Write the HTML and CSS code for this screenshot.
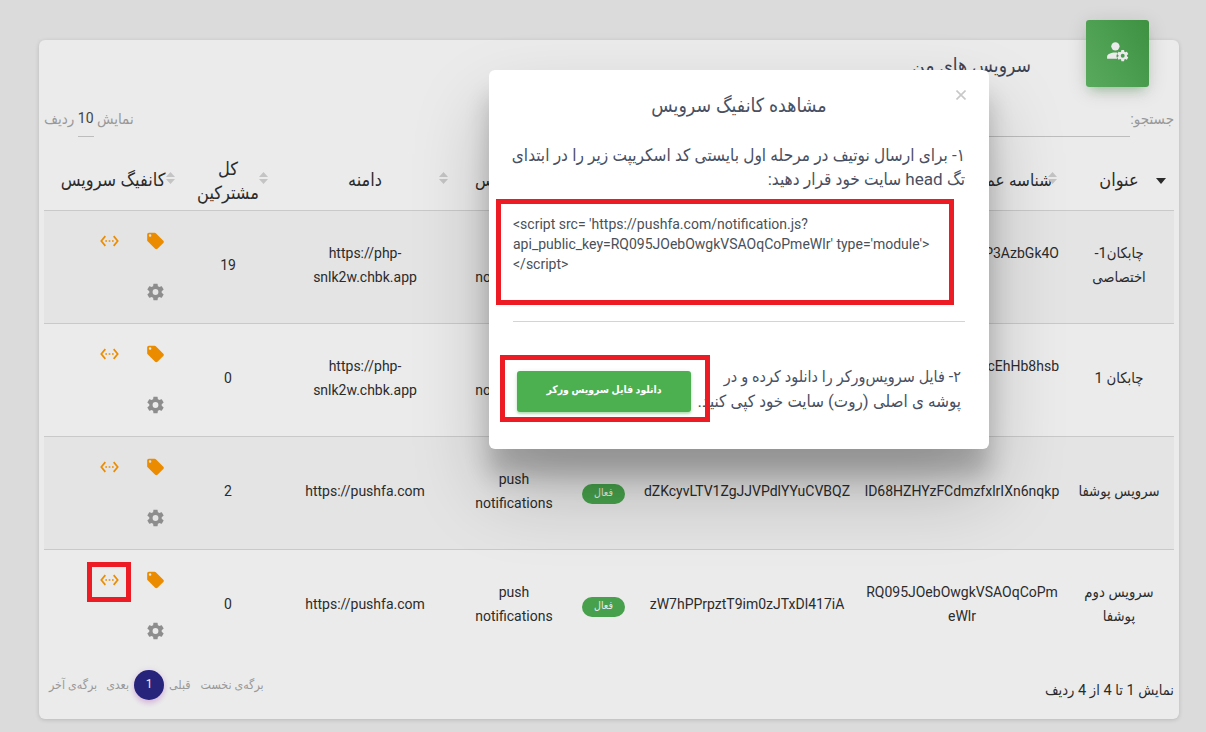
FILE: index.html
```html
<!DOCTYPE html>
<html lang="fa" dir="rtl">
<head>
<meta charset="utf-8">
<title>سرویس های من</title>
<link rel="stylesheet" href="styles.css">
</head>
<body>
<svg class="defs" aria-hidden="true">
  <symbol id="code" viewBox="0 0 24 24"><path d="M7.77 6.76L6.23 5.48.82 12l5.41 6.52 1.54-1.28L3.42 12l4.35-5.24zM7 13h2v-2H7v2zm10-2h-2v2h2v-2zm-6 2h2v-2h-2v2zm6.77-7.52l-1.54 1.28L20.58 12l-4.35 5.24 1.54 1.28L23.18 12l-5.41-6.52z"/></symbol>
  <symbol id="tag" viewBox="0 0 24 24"><path d="M5.5,7A1.5,1.5 0 0,1 4,5.5A1.5,1.5 0 0,1 5.5,4A1.5,1.5 0 0,1 7,5.5A1.5,1.5 0 0,1 5.5,7M21.41,11.58L12.41,2.58C12.05,2.22 11.55,2 11,2H4C2.89,2 2,2.89 2,4V11C2,11.55 2.22,12.05 2.59,12.41L11.58,21.41C11.95,21.77 12.45,22 13,22C13.55,22 14.05,21.77 14.41,21.41L21.41,14.41C21.78,14.05 22,13.55 22,13C22,12.44 21.77,11.94 21.41,11.58Z"/></symbol>
  <symbol id="cog" viewBox="0 0 24 24"><path d="M12,15.5A3.5,3.5 0 0,1 8.5,12A3.5,3.5 0 0,1 12,8.5A3.5,3.5 0 0,1 15.5,12A3.5,3.5 0 0,1 12,15.5M19.43,12.97C19.47,12.65 19.5,12.33 19.5,12C19.5,11.67 19.47,11.34 19.43,11L21.54,9.37C21.73,9.22 21.78,8.95 21.66,8.73L19.66,5.27C19.54,5.05 19.27,4.96 19.05,5.05L16.56,6.05C16.04,5.66 15.5,5.32 14.87,5.07L14.5,2.42C14.46,2.18 14.25,2 14,2H10C9.75,2 9.54,2.18 9.5,2.42L9.13,5.07C8.5,5.32 7.96,5.66 7.44,6.05L4.95,5.05C4.73,4.96 4.46,5.05 4.34,5.27L2.34,8.73C2.21,8.95 2.27,9.22 2.46,9.37L4.57,11C4.53,11.34 4.5,11.67 4.5,12C4.5,12.33 4.53,12.65 4.57,12.97L2.46,14.63C2.27,14.78 2.21,15.05 2.34,15.27L4.34,18.73C4.46,18.95 4.73,19.03 4.95,18.95L7.44,17.94C7.96,18.34 8.5,18.68 9.13,18.93L9.5,21.58C9.54,21.82 9.75,22 10,22H14C14.25,22 14.46,21.82 14.5,21.58L14.87,18.93C15.5,18.67 16.04,18.34 16.56,17.94L19.05,18.95C19.27,19.03 19.54,18.95 19.66,18.73L21.66,15.27C21.78,15.05 21.73,14.78 21.54,14.63L19.43,12.97Z"/></symbol>
  <symbol id="sort" viewBox="0 0 9 12"><path d="M0 5L4.5 0L9 5ZM0 7H9L4.5 12Z"/></symbol>
</svg>

<main class="card">
  <div class="card-icon">
    <svg viewBox="0 0 24 24"><circle cx="10" cy="8" r="4"/><path d="M10 14C5.58 14 2 15.79 2 18V20H11.7A6.2 6.2 0 0 1 11.9 14.1C11.2 14 10.6 14 10 14Z"/><use href="#cog" x="10.5" y="10.5" width="13" height="13"/></svg>
  </div>
  <h1 class="card-title">سرویس های من</h1>

  <div class="toolbar">
    <label class="search"><span>جستجو:</span><span class="search-line"></span></label>
    <div class="length"><span>نمایش</span><span class="length-value">10</span><span>ردیف</span></div>
  </div>

  <div class="table">
    <div class="row head">
      <div class="cell first">عنوان<svg class="caret" viewBox="0 0 10 6"><path d="M0 0H10L5 6Z"/></svg></div>
      <div class="cell key"><span>شناسه عمومی</span><svg class="sort"><use href="#sort"/></svg></div>
      <div class="cell"></div>
      <div class="cell"></div>
      <div class="cell kind">نوع سرویس</div>
      <div class="cell">دامنه<svg class="sort"><use href="#sort"/></svg></div>
      <div class="cell total">کل مشترکین<svg class="sort"><use href="#sort"/></svg></div>
      <div class="cell config">کانفیگ سرویس<svg class="sort"><use href="#sort"/></svg></div>
    </div>

    <div class="row odd">
      <div class="cell name">چابکان1-<br>اختصاصی</div>
      <div class="cell clipped" dir="ltr">P3AzbGk4O</div>
      <div class="cell"></div>
      <div class="cell"></div>
      <div class="cell" dir="ltr">push<br>notifications</div>
      <div class="cell" dir="ltr">https://php-<br>snlk2w.chbk.app</div>
      <div class="cell">19</div>
      <div class="cell actions"><svg class="orange"><use href="#tag"/></svg><svg class="orange"><use href="#code"/></svg><svg class="grey"><use href="#cog"/></svg></div>
    </div>

    <div class="row">
      <div class="cell name">چابکان 1</div>
      <div class="cell clipped" dir="ltr">cEhHb8hsb</div>
      <div class="cell"></div>
      <div class="cell"></div>
      <div class="cell" dir="ltr">push<br>notifications</div>
      <div class="cell" dir="ltr">https://php-<br>snlk2w.chbk.app</div>
      <div class="cell">0</div>
      <div class="cell actions"><svg class="orange"><use href="#tag"/></svg><svg class="orange"><use href="#code"/></svg><svg class="grey"><use href="#cog"/></svg></div>
    </div>

    <div class="row odd">
      <div class="cell name">سرویس پوشفا</div>
      <div class="cell" dir="ltr">lD68HZHYzFCdmzfxlrIXn6nqkp</div>
      <div class="cell" dir="ltr">dZKcyvLTV1ZgJJVPdlYYuCVBQZ</div>
      <div class="cell"><span class="badge">فعال</span></div>
      <div class="cell" dir="ltr">push<br>notifications</div>
      <div class="cell" dir="ltr">https://pushfa.com</div>
      <div class="cell">2</div>
      <div class="cell actions"><svg class="orange"><use href="#tag"/></svg><svg class="orange"><use href="#code"/></svg><svg class="grey"><use href="#cog"/></svg></div>
    </div>

    <div class="row">
      <div class="cell name">سرویس دوم<br>پوشفا</div>
      <div class="cell" dir="ltr">RQ095JOebOwgkVSAOqCoPm<br>eWlr</div>
      <div class="cell" dir="ltr">zW7hPPrpztT9im0zJTxDl417iA</div>
      <div class="cell"><span class="badge">فعال</span></div>
      <div class="cell" dir="ltr">push<br>notifications</div>
      <div class="cell" dir="ltr">https://pushfa.com</div>
      <div class="cell">0</div>
      <div class="cell actions"><svg class="orange"><use href="#tag"/></svg><svg class="orange"><use href="#code"/></svg><svg class="grey"><use href="#cog"/></svg></div>
    </div>
  </div>

  <div class="footer">
    <div class="info">نمایش 1 تا 4 از 4 ردیف</div>
    <nav class="pages"><span class="pg-first">برگه‌ی نخست</span><span class="pg-prev">قبلی</span><span class="current">1</span><span class="pg-next">بعدی</span><span class="pg-last">برگه‌ی آخر</span></nav>
  </div>
</main>

<section class="modal">
  <svg class="close" viewBox="0 0 10 10"><path d="M.5 .5L9.5 9.5M9.5 .5L.5 9.5"/></svg>
  <h2 class="modal-title">مشاهده کانفیگ سرویس</h2>
  <div class="step">
    <div class="justify">۱- برای ارسال نوتیف در مرحله اول بایستی کد اسکریپت زیر را در ابتدای</div>
    <div>تگ head سایت خود قرار دهید:</div>
  </div>
  <div class="code" dir="ltr">&lt;script src= 'https://pushfa.com/notification.js?<br>api_public_key=RQ095JOebOwgkVSAOqCoPmeWlr' type='module'&gt;<br>&lt;/script&gt;</div>
  <div class="download">
    <div class="download-text"><div class="tight">۲- فایل سرویس‌ورکر را دانلود کرده و در</div><div>پوشه ی اصلی (روت) سایت خود کپی کنید.</div></div>
    <button class="btn">دانلود فایل سرویس ورکر</button>
  </div>
</section>

<div class="mark mark-code"></div>
<div class="mark mark-button"></div>
<div class="mark mark-icon"></div>
</body>
</html>
```
FILE: styles.css
```css
* { box-sizing: border-box; }
body {
  margin: 0;
  width: 1206px;
  height: 732px;
  padding: 40px 27px 0 39px;
  overflow: hidden;
  background: #dbdbdb;
  color: #2b2b2b;
  font: 14px/24px Roboto, "DejaVu Sans Condensed", "DejaVu Sans", sans-serif;
}
.defs { position: absolute; width: 0; height: 0; }
svg { fill: currentColor; }

.card {
  position: relative;
  width: 1140px;
  height: 679px;
  padding: 0 5px;
  border-radius: 6px;
  background: #ebebeb;
  box-shadow: 0 1px 4px rgba(0, 0, 0, .16);
}
.card-icon {
  position: absolute;
  top: -20px;
  right: 30px;
  width: 63px;
  height: 67px;
  padding: 18px 19px;
  border-radius: 3px;
  background: linear-gradient(60deg, #5aaa5e, #3d9141);
  color: #ebebeb;
  box-shadow: 0 4px 20px rgba(0, 0, 0, .14), 0 7px 10px -5px rgba(76, 175, 80, .4);
}
.card-icon svg { display: block; width: 25px; height: 25px; }
.card-title {
  margin: 0;
  padding: 14px 143px 0 0;
  height: 66px;
  font-size: 19.2px;
  font-weight: 400;
  color: #3c4353;
}

.toolbar {
  display: flex;
  justify-content: space-between;
  height: 45px;
  color: #999;
  font-size: 15px;
}
.search { display: flex; }
.search span:first-child { padding-top: 1px; }
.search-line { width: 200px; height: 31px; border-bottom: 1px solid #bdbdbd; }
.length { display: flex; gap: 3.5px; }
.length span { padding-top: 1px; }
.length .length-value {
  height: 31px;
  padding: 0;
  border-bottom: 1px solid #bdbdbd;
  color: #444;
  font-size: 14px;
}

.row {
  display: grid;
  grid-template-columns: 110px 204px 226px 61px 118px 180px 94px 137px;
  height: 113px;
  border-top: 1px solid #c9c9c9;
}
.odd { background: #e4e4e4; }
.head { height: 59px; border: 0; font-size: 18px; }
.cell {
  position: relative;
  display: flex;
  align-items: center;
  justify-content: center;
  text-align: center;
  padding-bottom: 4px;
  white-space: nowrap;
}
.head .cell { padding-bottom: 1px; }
.head .total { white-space: normal; padding: 0 14px 0; }
.head .key { justify-content: flex-start; padding-right: 12px; font-size: 17px; }
.head .kind { font-size: 17px; }
.head .config { padding-left: 1px; }
.caret { position: absolute; right: 8px; top: 27px; width: 10px; height: 6px; }
.sort { position: absolute; right: 7px; top: 21px; width: 9px; height: 12px; color: #c4c4c4; }
.config .sort { right: 6px; }
.name { font-size: 14.7px; }
.clipped { align-items: flex-start; justify-content: flex-end; padding: 30px 0 0 0; padding-right: 5px; }
.actions {
  display: grid;
  grid-template-columns: 21px 21px;
  grid-template-rows: 20px 20px;
  gap: 31px 25px;
  justify-content: start;
  align-content: start;
  padding: 20px 15px 0 0;
}
.actions svg { width: 21px; height: 20px; }
.orange { color: #eb8c00; }
.grey { color: #8d8d8d; }
.badge {
  width: 43px;
  height: 20px;
  margin-top: 6px;
  border-radius: 10px;
  background: #47a04b;
  color: #ebebeb;
  font-size: 10.5px;
  font-weight: 500;
  line-height: 17px;
}

.footer { display: flex; justify-content: space-between; padding-top: 8px; }
.info { padding-top: 8px; font-size: 14.6px; }
.pages { display: flex; align-items: center; height: 30px; padding-left: 5px; color: #999; font-size: 12.3px; }
.current {
  width: 30px;
  height: 30px;
  margin: 0 5px;
  border-radius: 50%;
  background: #27247b;
  color: #ebebeb;
  font-size: 12px;
  line-height: 29px;
  text-align: center;
  box-shadow: 0 4px 5px rgba(156, 39, 176, .14), 0 1px 6px rgba(156, 39, 176, .2);
}
.pg-first { margin-left: 10px; }
.pg-last { margin-right: 9px; }

.modal {
  position: absolute;
  left: 489px;
  top: 70px;
  width: 500px;
  height: 379px;
  padding: 24px 24px 0;
  border-radius: 6px;
  background: #fff;
  color: #495057;
  box-shadow: 0 27px 24px 0 rgba(0, 0, 0, .2), 0 40px 77px 0 rgba(0, 0, 0, .22);
}
.close {
  position: absolute;
  right: 23px;
  top: 20px;
  width: 10px;
  height: 10px;
  fill: none;
  stroke: #c8c8c8;
  stroke-width: 1.6;
}
.modal-title { margin: 0; font-size: 19.4px; font-weight: 400; text-align: center; color: #495062; }
.step { padding-top: 25px; font-size: 17.1px; color: #495062; }
.justify { text-align: justify; text-align-last: justify; white-space: nowrap; }
.code { height: 108px; margin-top: 23px; border-bottom: 1px solid #d4d4d4; font-size: 14px; line-height: 20px; }
.download { display: flex; justify-content: space-between; align-items: flex-start; padding: 43px 4px 0; }
.download-text { font-size: 16.9px; color: #495062; white-space: nowrap; }
.tight { font-size: 16px; }
.btn {
  width: 174px;
  height: 41px;
  margin-top: 6px;
  padding: 0 0 4px;
  border: 0;
  border-radius: 3px;
  background: #4caf50;
  color: #fff;
  font: bold 10.4px Roboto, "DejaVu Sans Condensed", "DejaVu Sans", sans-serif;
  box-shadow: 0 2px 2px rgba(76, 175, 80, .3), 0 1px 5px rgba(76, 175, 80, .2);
}

.mark { position: absolute; border: 5px solid #ed1c24; }
.mark-code { left: 496px; top: 199px; width: 458px; height: 106px; }
.mark-button { left: 500px; top: 355px; width: 210px; height: 67px; }
.mark-icon { left: 87px; top: 562px; width: 44px; height: 40px; }
```
